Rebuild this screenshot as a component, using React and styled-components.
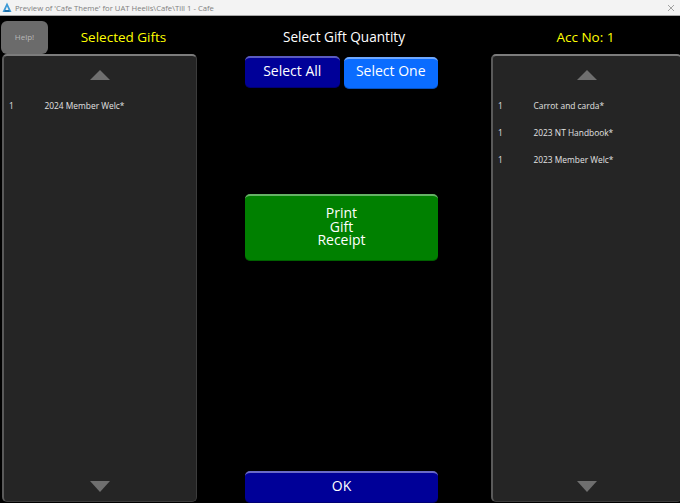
import React from 'react'
import styled, { createGlobalStyle } from 'styled-components'

const GlobalStyle = createGlobalStyle`
    html, body {
        margin: 0;
        padding: 0;
        background: #000;
    }
    body {
        font-family: "Open Sans", "Noto Sans", sans-serif;
    }
`

const Window = styled('div')`
    width: 680px;
    height: 503px;
    display: flex;
    flex-direction: column;
    overflow: hidden;
    background: #000;
`

const TitleBar = styled('div')`
    height: 15px;
    flex: none;
    display: flex;
    align-items: center;
    gap: 3px;
    padding: 0 5px 0 2px;
    background: #f3f3f3;
    border-bottom: 1px solid #a8a8a8;
    color: #808080;
    font-size: 7.7px;
`

const TitleText = styled('span')`
    flex: 1;
    white-space: nowrap;
`

const Screen = styled('div')`
    flex: 1;
    min-height: 0;
    display: grid;
    grid-template-columns: 195px 1fr 189px;
    padding-left: 2px;
`

const Column = styled('div')`
    display: flex;
    flex-direction: column;
    min-height: 0;
    margin-right: ${props => (props.$bleed ? '-2px' : '0')};
`

const CentreColumn = styled(Column)`
    margin: 0 53px 0 48px;
`

const Header = styled('div')`
    height: 38px;
    flex: none;
    display: flex;
    align-items: flex-start;
`

const HelpButton = styled('button')`
    width: 47px;
    height: 33px;
    margin: 5px 0 0 -1px;
    padding: 0 0 3px;
    border: 0;
    border-radius: 6px;
    background: #6b6b6b;
    color: #b8b8b8;
    font-family: inherit;
    font-size: 8px;
`

const Heading = styled('div')`
    flex: 1;
    margin-left: ${props => props.$nudge || 0}px;
    padding-top: 12px;
    text-align: center;
    font-size: ${props => props.$size || 13.5}px;
    line-height: 18px;
    color: ${props => props.$color || '#ffffff'};
`

const ListPanel = styled('div')`
    flex: 1;
    min-height: 0;
    display: flex;
    flex-direction: column;
    align-items: stretch;
    margin-bottom: 1px;
    border-radius: 5px;
    border-top: 2px solid #7c7c7c;
    border-left: 2px solid #5a5a5a;
    border-right: 1px solid #3c3c3c;
    border-bottom: 1px solid #3c3c3c;
    background: #252525;
`

const Rows = styled('div')`
    flex: 1;
    padding-top: 12px;
`

const Row = styled('div')`
    height: 27px;
    display: flex;
    align-items: center;
    padding-left: 5px;
    color: #e2e2e2;
    font-size: 8.4px;
`

const Qty = styled('span')`
    width: 35.5px;
    flex: none;
`

const Arrow = styled('div')`
    flex: none;
    align-self: center;
    width: 0;
    height: 0;
    border-left: 10px solid transparent;
    border-right: 10px solid transparent;
    margin: ${props => (props.$down ? '0 0 9px' : '14px 0 0')};
    ${props =>
        props.$down
            ? 'border-top: 11px solid #6f6f6f;'
            : 'border-bottom: 10px solid #6f6f6f;'}
`

const ButtonRow = styled('div')`
    display: flex;
    gap: 4px;
    align-items: flex-start;
    height: 33px;
    margin-top: 2px;
`

const TouchButton = styled('button')`
    flex: ${props => (props.$fill ? '1' : 'none')};
    width: ${props => (props.$fill ? 'auto' : '100%')};
    height: ${props => props.$height || 32}px;
    margin-top: ${props => props.$top || 0}px;
    padding: 0 0 ${props => props.$lift || 4}px;
    border: 0;
    border-radius: 5px;
    border-top: 2px solid ${props => props.$edge};
    background: ${props => props.$bg};
    box-shadow: inset 0 -1px 0 rgba(0, 0, 0, 0.25);
    color: #fff;
    font-family: inherit;
    font-size: 14px;
    line-height: 13.5px;
    white-space: pre-line;
`

const Spacer = styled('div')`
    flex: 1;
`

const OkRow = styled('div')`
    height: 32px;
    flex: none;
`

const GiftList = ({ gifts }) => (
    <ListPanel>
        <Arrow />
        <Rows>
            {gifts.map(gift => (
                <Row key={gift}>
                    <Qty>1</Qty>
                    {gift}
                </Row>
            ))}
        </Rows>
        <Arrow $down />
    </ListPanel>
)

const AppLogo = () => (
    <svg width="10" height="11" viewBox="0 0 10 11">
        <path d="M5 0.5 L9.5 10 L7.4 10 L5 4.6 L2.6 10 L0.5 10 Z" fill="#3d9ad6" />
        <path d="M2.8 8 L7.2 8 L7.8 10 L2.2 10 Z" fill="#1f6fa8" />
    </svg>
)

const App = () => {
    return (
        <Window>
            <GlobalStyle />
            <TitleBar>
                <AppLogo />
                <TitleText>Preview of 'Cafe Theme' for UAT Heelis\Cafe\Till 1 - Cafe</TitleText>
                <svg width="8" height="8" viewBox="0 0 8 8">
                    <path d="M1 1 L7 7 M7 1 L1 7" stroke="#8c8c8c" strokeWidth="0.8" />
                </svg>
            </TitleBar>
            <Screen>
                <Column>
                    <Header>
                        <HelpButton>Help!</HelpButton>
                        <Heading $color="#ffff00" $nudge={2}>Selected Gifts</Heading>
                    </Header>
                    <GiftList gifts={['2024 Member Welc*']} />
                </Column>
                <CentreColumn>
                    <Header>
                        <Heading $size={13.6} $nudge={5}>Select Gift Quantity</Heading>
                    </Header>
                    <ButtonRow>
                        <TouchButton $fill $bg="#000098" $edge="#5a5ac0">Select All</TouchButton>
                        <TouchButton $fill $top={1} $lift={6} $bg="#0a6cff" $edge="#6fa8ff">Select One</TouchButton>
                    </ButtonRow>
                    <TouchButton $top={105} $height={67} $bg="#008000" $edge="#66b266">
                        {'Print\nGift\nReceipt'}
                    </TouchButton>
                    <Spacer />
                    <OkRow>
                        <TouchButton $bg="#000098" $edge="#6a6ac8">OK</TouchButton>
                    </OkRow>
                </CentreColumn>
                <Column $bleed>
                    <Header>
                        <Heading $color="#ffff00" $nudge={-2}>Acc No: 1</Heading>
                    </Header>
                    <GiftList gifts={['Carrot and carda*', '2023 NT Handbook*', '2023 Member Welc*']} />
                </Column>
            </Screen>
        </Window>
    )
}

export default App
